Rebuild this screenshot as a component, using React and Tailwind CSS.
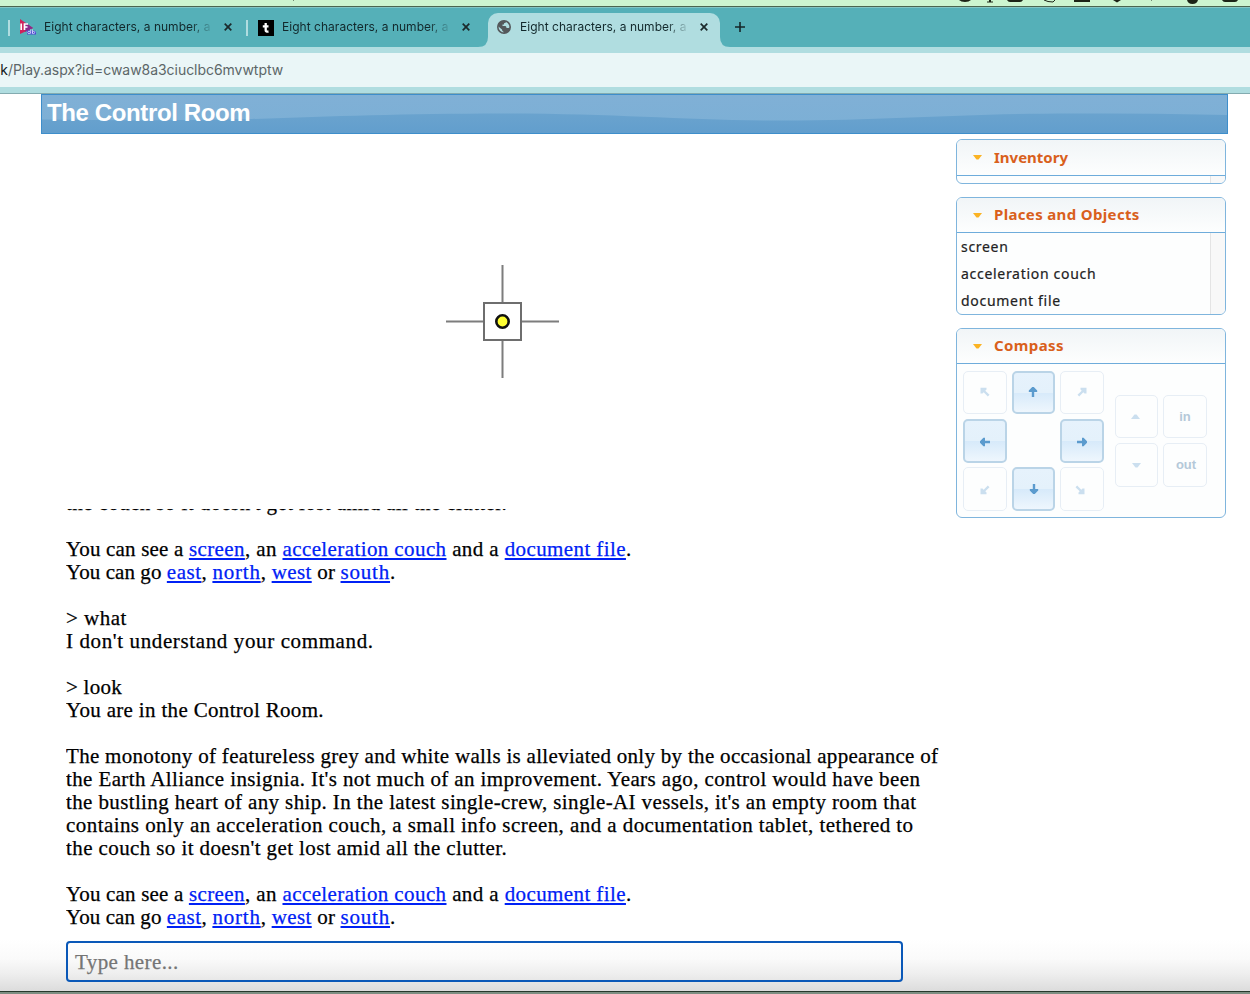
const serif = 'font-["Liberation_Serif",serif] [-webkit-text-stroke:0.25px_currentColor]';
const inter = 'font-[Inter,sans-serif]';

function Link({ children, className = "" }) {
  return (
    <a className={"text-[#0021f5] underline decoration-[2px] underline-offset-[2px] " + className}>{children}</a>
  );
}

function Exits() {
  return (
    <>
      <p className="tracking-[0.4px]">
        <span className="tracking-[0.18px]">You can see a </span><Link>screen</Link>, an <Link>acceleration couch</Link> and a <Link>document file</Link>.
      </p>
      <p className="tracking-[0.2px]">
        <span className="tracking-[0.08px]">You can go </span><Link className="tracking-[0.5px]">east</Link>, <Link className="tracking-[0.8px]">north</Link>, <Link className="tracking-[0.4px]">west</Link> or <Link className="tracking-[0.8px]">south</Link>.
      </p>
    </>
  );
}

function Close() {
  return (
    <svg className="size-2 shrink-0" viewBox="0 0 8 8" stroke="#1b2a2c" strokeWidth="1.7">
      <path d="M.7.7l6.6 6.6M7.3.7L.7 7.3" />
    </svg>
  );
}

function TabTitle() {
  return (
    <span className="-mt-[2px] w-[168px] overflow-hidden whitespace-nowrap font-[Inter,sans-serif] text-[12px] leading-4 tracking-[0.03px] text-[#12282b] [mask-image:linear-gradient(to_right,black_146px,transparent_170px)]">
      Eight characters, a number, a
    </span>
  );
}

function Triangle() {
  return (
    <svg className="ml-[16px] mr-[12px] h-[5px] w-[9px]" viewBox="0 0 9 5">
      <path d="M0 0H9L5.5 4.5H3.5Z" fill="#fbb323" />
    </svg>
  );
}

function PanelHeader({ title, className }) {
  return (
    <div className={"flex shrink-0 items-center border-b border-[#6eacdb] bg-gradient-to-b from-[#f1f5f7] to-[#fdfefe] " + className}>
      <Triangle />
      <h2 className='-mt-[2px] font-["Noto_Sans",sans-serif] text-[15px] font-bold leading-5 text-[#d9601c]'>{title}</h2>
    </div>
  );
}

const panel = "flex w-[270px] flex-col overflow-hidden rounded-[6px] border border-[#7fb5dd] bg-[#fdfefe]";

const ARROWS = {
  n: "M4.2 0H5.8L9.2 3.4V5H6.2V10H3.8V5H.8V3.4Z",
  s: "M4.2 10H5.8L9.2 6.600V5H6.200V0H3.800V5H.8V6.600Z",
  w: "M0 4.200V5.800L3.400 9.200H5V6.200H10V3.800H5V.8H3.400Z",
  e: "M10 4.200V5.800L6.600 9.200H5V6.200H0V3.800H5V.8H6.600Z",
  nw: "M0.500 .8H6.500V2.500L5.300 3.700L9.500 7.800L7.800 9.500L3.700 5.300L2.500 6.500H.5Z",
  ne: "M9.500 .8H3.500V2.500L4.700 3.700L.5 7.800L2.200 9.500L6.300 5.300L7.500 6.500H9.500Z",
  sw: "M0.500 9.200H6.500V7.500L5.300 6.300L9.500 2.200L7.800 .5L3.700 4.700L2.500 3.500H.5Z",
  se: "M9.500 9.200H3.500V7.500L4.700 6.300L.5 2.200L2.200 .5L6.300 4.700L7.500 3.500H9.500Z",
};

function Dir({ dir, on, className = "" }) {
  return (
    <div
      className={
        "flex w-full items-center justify-center rounded-[5px] " +
        (on
          ? "border-2 border-[#bad4e7] bg-[linear-gradient(to_bottom,#e6f2fc_0%,#e4f1fb_50%,#d7eafa_51%,#eef6fd_100%)] "
          : "border border-[#e7eef5] bg-[#fdfefe] ") +
        className
      }
    >
      <svg className="size-[10px]" viewBox="0 0 10 10" fill={on ? "#5b9bce" : "#cbdfef"}>
        <path d={ARROWS[dir]} />
      </svg>
    </div>
  );
}

function SmallButton({ children }) {
  return (
    <div className='flex items-center justify-center rounded-[5px] border border-[#e7eef5] bg-[#fdfefe] font-["Liberation_Sans",sans-serif] text-[13px] font-bold leading-4 text-[#b5c9d9]'>
      {children}
    </div>
  );
}

export default function App() {
  return (
    <div className="flex h-[994px] w-[1250px] flex-col overflow-hidden bg-white">
      {/* System menu bar edge */}
      <div className="h-[6px] shrink-0 bg-[#cdf5d0]">
        <svg className="block h-[6px] w-[1250px]" viewBox="0 0 1250 6" fill="#1c2417">
          <path d="M959 0H971Q969 2 965 2Q961 2 959 0ZM989 0H991V1.5H993V2.5H987V1.5H989ZM1007 0H1023Q1022 2 1020 2H1010Q1008 2 1007 0ZM1074 0H1090V2H1074ZM1113 0H1121L1117 2.5ZM1222 0H1238Q1237 2 1235 2H1225Q1223 2 1222 0Z" />
          <path d="M1187 0H1198Q1197 4 1192.500 4Q1188 4 1187 0Z" />
          <path d="M1044 0L1048 1.500L1053 2L1055 0" fill="none" stroke="#1c2417" />
          <path d="M1151 0h1v1h-1zM293 0h1v1h-1z" opacity=".5" />
        </svg>
      </div>
      <div className="h-px shrink-0 bg-[#4b6650]" />
      <div className="h-px shrink-0 bg-[#82c5c3]" />

      {/* Tab strip */}
      <div className="flex h-[39px] shrink-0 items-start bg-[#55b0b8]">
        <div className="flex h-[39px] w-[246px] items-center pl-2">
          <div className="h-4 w-[2px] bg-[#b0dde0]" />
          <svg className="ml-[9px] mr-2 size-[17px]" viewBox="0 0 17 17">
            <path d="M1 0L14 9L1 15Z" fill="#d0215a" />
            <path d="M6 3.500L14 9L6 13Z" fill="#8b2a8c" />
            <path d="M2.200 4.500V11M5.500 11V5H9M5.500 8H8.500" stroke="#fff" strokeWidth="1.700" fill="none" />
            <path d="M8 11.500h7l2 1.500v2.500h-9z" fill="#4a46cf" />
            <circle cx="10" cy="13.500" r="1.200" fill="none" stroke="#dfe0ff" strokeWidth=".8" />
            <path d="M11.700 10.500v4.200M13.500 10.500v4.200" stroke="#dfe0ff" strokeWidth=".8" />
            <circle cx="14.600" cy="13.500" r="1.100" fill="none" stroke="#dfe0ff" strokeWidth=".8" />
          </svg>
          <TabTitle />
          <div className="-mt-px ml-3 flex"><Close /></div>
        </div>
        <div className="flex h-[39px] w-[242px] items-center">
          <div className="h-4 w-[2px] bg-[#b0dde0]" />
          <svg className="ml-[10px] mr-2 size-4" viewBox="0 0 16 16">
            <path d="M0 0H16V16H0Z" fill="#000" />
            <path d="M7.700 3V10.500Q7.700 12 10.500 11.500M4.800 6.300H10.500" stroke="#fff" strokeWidth="2.300" fill="none" />
          </svg>
          <TabTitle />
          <div className="-mt-px ml-3 flex"><Close /></div>
        </div>
        <div className="relative mt-[5px] flex h-[34px] w-[232px] items-center rounded-t-[10px] bg-[#b0dde0] pb-[5px]">
          <svg className="absolute -left-[10px] bottom-0 size-[10px]" viewBox="0 0 10 10"><path d="M10 0V10H0Q10 10 10 0Z" fill="#b0dde0" /></svg>
          <svg className="absolute -right-[10px] bottom-0 size-[10px]" viewBox="0 0 10 10"><path d="M0 0V10H10Q0 10 0 0Z" fill="#b0dde0" /></svg>
          <svg className="-mt-px ml-[9px] mr-[9px] size-[14px]" viewBox="0 0 14 14">
            <circle cx="7" cy="7" r="6.200" fill="#b0dde0" stroke="#54585b" strokeWidth="1.600" />
            <path d="M0.800 6C1 3 3.500 .8 7 .8L9 1.200C9.200 2.500 8.500 3.200 7 3.200V4.500H5.500V6H8.500Q9.500 6.300 9.500 8H11.500Q12.500 8 13.200 7Q13 11 9 13L6.500 13.200V11.800Q5 11.300 5 9.500Z" fill="#54585b" />
          </svg>
          <TabTitle />
          <div className="-mt-px ml-3 flex"><Close /></div>
        </div>
        <svg className="ml-[15px] mt-[14px] size-[10px]" viewBox="0 0 10 10" stroke="#152628" strokeWidth="1.600"><path d="M5 0V10M0 5H10" /></svg>
      </div>

      {/* Address bar */}
      <div className="h-[46px] shrink-0 border-y-[6px] border-[#b0dde0] bg-[#eaf6f7]">
        <div className={inter + " whitespace-nowrap pt-[7px] text-[14px] leading-5 tracking-[-0.04px] text-[#5c6668]"}>
          <span className="-ml-[8px] text-[#12181a]">uk</span>/Play.aspx?id=cwaw8a3ciuclbc6mvwtptw
        </div>
      </div>
      <div className="h-px shrink-0 bg-[#83abb0]" />

      {/* Page */}
      <div className="flex h-[897px] shrink-0 flex-col bg-[linear-gradient(to_bottom,white_845px,#fafafa_865px,#eeeeee_880px,#dcdcdc_897px)]">
        <header className="ml-[41px] grid h-[40px] w-[1187px] shrink-0 border border-[#3e8ecb]">
          <svg className="col-start-1 row-start-1 h-[38px] w-[1185px]" viewBox="0 0 1185 38" preserveAspectRatio="none">
            <defs>
              <linearGradient id="base" x1="0" y1="0" x2="0" y2="1">
                <stop offset="0" stopColor="#80b0d6" />
                <stop offset="1" stopColor="#7bafd5" />
              </linearGradient>
              <linearGradient id="wave" x1="0" y1="0" x2="0" y2="1">
                <stop offset="0" stopColor="#6aa3ce" />
                <stop offset="1" stopColor="#629ecd" />
              </linearGradient>
            </defs>
            <path d="M0 0H1185V38H0Z" fill="url(#base)" />
            <path d="M0 24.500C80 25.500 150 25.500 210 24C290 21.500 360 18.500 460 18.500C580 18.500 640 25.500 740 25.500C850 25.500 920 18.500 1030 18.500Q1120 18 1185 20V38H0Z" fill="url(#wave)" />
          </svg>
          <h1 className='col-start-1 row-start-1 pl-[5px] pt-[4px] font-["Liberation_Sans",sans-serif] text-[24px] font-bold leading-7 tracking-[-0.38px] text-white'>
            The Control Room
          </h1>
        </header>

        <div className="flex h-[857px]">
          <main className="ml-[66px] flex w-[890px] flex-col">
            <div className="h-[375px] shrink-0 pl-[379px] pt-[130px]">
              <svg className="size-[116px]" viewBox="0 0 116 116">
                <path d="M57.500 1V38M57.500 77V114M1 57.500H38M77 57.500H114" stroke="#7d7d7d" strokeWidth="2" />
                <path d="M39 39H76V76H39Z" fill="none" stroke="#6e6e6e" strokeWidth="2" />
                <circle cx="57.500" cy="57.500" r="6.200" fill="#ffff33" stroke="#111" strokeWidth="2.600" />
              </svg>
            </div>
            <div className={serif + " h-[432px] shrink-0 overflow-hidden whitespace-nowrap text-[21px] leading-[23px] text-black"}>
              <p className="-mt-[17px] mb-[23px] tracking-[0.4px]">the couch so it doesn't get lost amid all the clutter.</p>
              <Exits />
              <p className="mt-[23px] tracking-[0.5px]">&gt; what</p>
              <p className="tracking-[0.62px]">I don't understand your command.</p>
              <p className="mt-[23px] tracking-[0.25px]">&gt; look</p>
              <p className="tracking-[0.33px]">You are in the Control Room.</p>
              <div className="my-[23px]">
                <p className="tracking-[0.3px]">The monotony of featureless grey and white walls is alleviated only by the occasional appearance of</p>
                <p className="tracking-[0.385px]">the Earth Alliance insignia. It's not much of an improvement. Years ago, control would have been</p>
                <p className="tracking-[0.375px]">the bustling heart of any ship. In the latest single-crew, single-AI vessels, it's an empty room that</p>
                <p className="tracking-[0.435px]">contains only an acceleration couch, a small info screen, and a documentation tablet, tethered to</p>
                <p className="tracking-[0.4px]">the couch so it doesn't get lost amid all the clutter.</p>
              </div>
              <Exits />
            </div>
            <div className={serif + " flex h-[41px] w-[837px] items-center rounded-[4px] border-2 border-[#0a58b8] pl-[7px] text-[21px] leading-6 tracking-[0.4px] text-[#757575]"}>
              Type here...
            </div>
          </main>

          <aside className="flex flex-col pt-[5px]">
            <section className={panel + " h-[45px]"}>
              <PanelHeader title="Inventory" className="h-[36px]" />
              <div className="flex flex-1 justify-end"><div className="w-[15px] border-l border-[#e4e4e4] bg-[#f8f8f8]" /></div>
            </section>
            <section className={panel + " mt-[13px] h-[118px]"}>
              <PanelHeader title="Places and Objects" className="h-[35px] tracking-[0.34px]" />
              <div className="flex flex-1 justify-between">
                <ul className='pl-1 font-["Noto_Sans",sans-serif] text-[14px] leading-[27px] tracking-[0.7px] text-[#222] [-webkit-text-stroke:0.2px_currentColor]'>
                  <li>screen</li>
                  <li>acceleration couch</li>
                  <li>document file</li>
                </ul>
                <div className="w-[15px] border-l border-[#e4e4e4] bg-[#f8f8f8]" />
              </div>
            </section>
            <section className={panel + " mt-[13px] h-[190px]"}>
              <PanelHeader title="Compass" className="h-[35px] tracking-[0.4px]" />
              <div className="flex flex-1">
                <div className="ml-[6px] mt-[7px] grid h-[140px] grid-cols-[44px_43px_44px] grid-rows-[44px_44px_44px] gap-x-[5px] gap-y-[4px]">
                  <Dir dir="nw" className="h-[43px] pb-px" /><Dir dir="n" on className="h-[43px] pb-[2px] pr-[2px]" /><Dir dir="ne" className="h-[43px] pb-px" />
                  <Dir dir="w" on className="pt-[2px]" /><div /><Dir dir="e" on className="pt-[2px]" />
                  <Dir dir="sw" className="pt-[2px]" /><Dir dir="s" on /><Dir dir="se" className="pr-[4px] pt-[2px]" />
                </div>
                <div className="ml-[11px] mt-[31px] grid h-[92px] grid-cols-[43px_44px] grid-rows-[43px_44px] gap-[5px]">
                  <SmallButton><svg className="mr-[2px] h-[5px] w-[9px]" viewBox="0 0 9 5"><path d="M0 5L3.500 .5H5.500L9 5Z" fill="#cbdfef" /></svg></SmallButton>
                  <SmallButton>in</SmallButton>
                  <SmallButton><svg className="h-[5px] w-[9px]" viewBox="0 0 9 5"><path d="M0 0L3.500 4.500H5.500L9 0Z" fill="#cbdfef" /></svg></SmallButton>
                  <SmallButton><span className="ml-[2px]">out</span></SmallButton>
                </div>
              </div>
            </section>
          </aside>
        </div>
      </div>
      <div className="h-px shrink-0 bg-[#26382b]" />
      <div className="h-[2px] shrink-0 bg-[#7d8e82]" />
    </div>
  );
}
